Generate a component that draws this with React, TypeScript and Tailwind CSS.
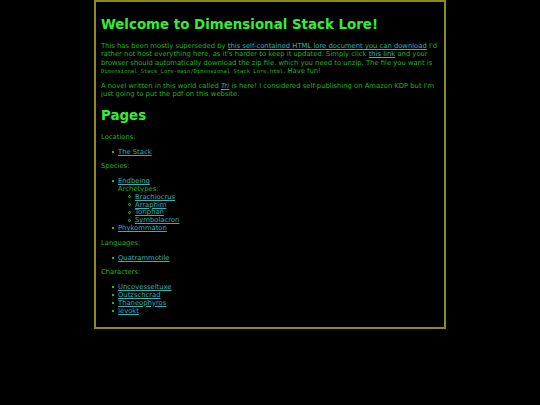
const link = "text-[#2eb4b4] underline";

const disc =
  "before:mr-[4px] before:-ml-[6px] before:inline-block before:h-[2px] before:w-[2px] before:bg-[#22bb22] before:align-middle before:content-['']";
const circle =
  "before:mr-[4px] before:-ml-[7px] before:inline-block before:h-[3px] before:w-[3px] before:rounded-full before:border before:border-[#22bb22] before:align-middle before:content-['']";

function Bullets({ items }: { items: string[] }) {
  return (
    <ul className="my-[7px] pl-[17px]">
      {items.map((item) => (
        <li key={item} className={disc}>
          <a href="#" className={link}>
            {item}
          </a>
        </li>
      ))}
    </ul>
  );
}

export default function App() {
  return (
    <div className="min-h-[405px] bg-black font-['DejaVu_Sans',sans-serif] text-[6.8px] leading-[7.8px] text-[#22b422]">
      <div className="mx-auto w-[352px] border-2 border-[#8c8c1e] px-[5px] pt-[6px] pb-[5px]">
        <h1 className="mt-[9px] mb-[9px] text-[13.4px] leading-[16px] font-bold text-[#33ee33]">
          Welcome to Dimensional Stack Lore!
        </h1>

        <p className="my-[7px] leading-[8.3px]">
          This has been mostly superseded by{" "}
          <a href="#" className={link}>
            this self-contained HTML lore document you can download
          </a>{" "}
          I'd rather not host everything here, as it's harder to keep it
          updated. Simply click{" "}
          <a href="#" className={link}>
            this link
          </a>{" "}
          and your browser should automatically download the zip file. which
          you need to unzip. The file you want is{" "}
          <code className="font-['DejaVu_Sans_Mono',monospace] text-[5.5px]">
            Dimensional_Stack_Lore-main/Dimensional Stack Lore.html
          </code>
          . Have fun!
        </p>

        <p className="my-[7px] leading-[8.3px]">
          A novel written in this world called{" "}
          <a href="#" className={`${link} italic`}>
            Tri
          </a>{" "}
          is here! I considered self-publishing on Amazon KDP but I'm just
          going to put the pdf on this website.
        </p>

        <h2 className="mt-[9px] mb-[10px] text-[13.4px] leading-[16px] font-bold text-[#33ee33]">
          Pages
        </h2>

        <p className="my-[7px]">Locations:</p>
        <Bullets items={["The Stack"]} />

        <p className="my-[7px]">Species:</p>
        <ul className="my-[7px] pl-[17px]">
          <li className={disc}>
            <a href="#" className={link}>
              Endbeing
            </a>
            <br />
            Archetypes:
            <ul className="pl-[17px]">
              {["Brachiocrus", "Arraphim", "Toriphan", "Symbolacron"].map(
                (name) => (
                  <li key={name} className={circle}>
                    <a href="#" className={link}>
                      {name}
                    </a>
                  </li>
                ),
              )}
            </ul>
          </li>
          <li className={disc}>
            <a href="#" className={link}>
              Phykommaton
            </a>
          </li>
        </ul>

        <p className="my-[7px]">Languages:</p>
        <Bullets items={["Quatrammotile"]} />

        <p className="my-[7px]">Characters:</p>
        <Bullets items={["Uncovesseltuxe", "Outzschcrad", "Thaneophyros", "Ievokt"]} />
      </div>
    </div>
  );
}
